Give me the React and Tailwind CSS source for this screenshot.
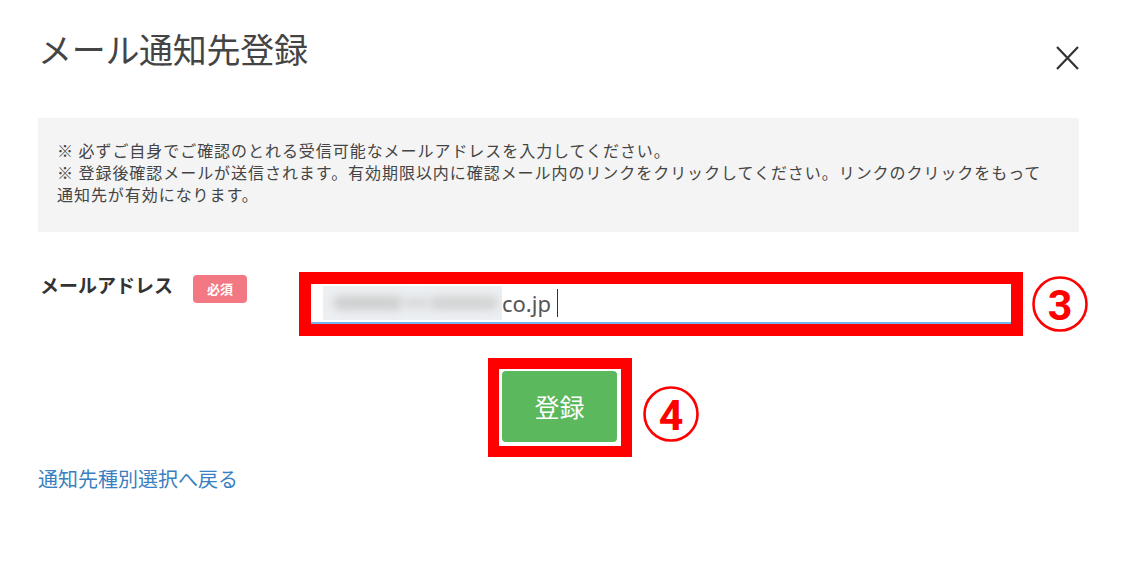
import React from "react";

const font = { fontFamily: '"Noto Sans CJK JP", "Noto Sans", sans-serif' };

const Circled = ({ n }) => (
    <svg width="58" height="58" viewBox="0 0 58 58">
        <circle cx="29" cy="29" r="26.5" fill="none" stroke="#ff0000" strokeWidth="2.6" />
        <text
            x="29"
            y="30"
            textAnchor="middle"
            dominantBaseline="central"
            fill="#ff0000"
            fontSize="43"
            fontWeight="700"
            fontFamily="Roboto, 'Liberation Sans', sans-serif"
        >
            {n}
        </text>
    </svg>
);

// blurred-out address, drawn as soft grey smudges
const Smudge = () => (
    <span className="relative w-[179px] h-[34px] bg-[#edf0f3] overflow-hidden shrink-0">
        <span className="absolute left-[10px] top-[10px] w-[70px] h-[14px] rounded-full bg-[#cdcdcd] blur-[5px]" />
        <span className="absolute left-[80px] top-[12px] w-[26px] h-[10px] rounded-full bg-[#d6d6d6] blur-[5px]" />
        <span className="absolute left-[106px] top-[10px] w-[70px] h-[14px] rounded-full bg-[#d2d2d2] blur-[5px]" />
    </span>
);

const App = () => {
    return (
        <div className="w-[1125px] h-[567px] bg-white overflow-hidden" style={font}>
            {/* header */}
            <div className="flex items-start justify-between pl-[38px] pr-[45px] pt-[32px]">
                <h1 className="text-[34px] leading-[34px] font-normal text-[#444] tracking-[-0.3px]">
                    メール通知先登録
                </h1>
                <svg className="mt-[14px]" width="25" height="24" viewBox="0 0 25 24">
                    <path d="M2 1 L23 23 M23 1 L2 23" stroke="#333" strokeWidth="2.2" fill="none" />
                </svg>
            </div>

            {/* notes */}
            <div className="ml-[38px] mt-[48px] w-[1041px] h-[114px] bg-[#f4f4f4] pl-[19px] pt-[21px] text-[16px] leading-[22px] text-[#444] tracking-[0.95px]">
                <p className="whitespace-nowrap">※ 必ずご自身でご確認のとれる受信可能なメールアドレスを入力してください。</p>
                <p className="whitespace-nowrap">
                    ※ 登録後確認メールが送信されます。有効期限以内に確認メール内のリンクをクリックしてください。リンクのクリックをもって
                </p>
                <p className="whitespace-nowrap">通知先が有効になります。</p>
            </div>

            {/* email row */}
            <div className="flex items-start ml-[38px] mt-[40px]">
                <div className="w-[261px] flex items-start">
                    <span className="ml-[2px] pt-[1px] text-[19px] leading-[24px] font-bold text-[#333]">
                        メールアドレス
                    </span>
                    <span className="ml-[20px] mt-[3px] w-[54px] h-[28px] rounded-[4px] bg-[#f27883] text-white text-[13px] font-bold flex items-center justify-center">
                        必須
                    </span>
                </div>
                <div className="flex items-center">
                    <div className="w-[724px] h-[64px] border-[12px] border-[#ff0000]">
                        <div className="h-full bg-white border-b-2 border-[#74b4ea] flex items-center pl-[12px]">
                            <Smudge />
                            <span
                                className="text-[22px] text-[#555] leading-none"
                                style={{ fontFamily: '"Noto Sans", "Open Sans", sans-serif' }}
                            >
                                co.jp
                            </span>
                            <span className="ml-[6px] w-[1.5px] h-[28px] bg-[#333]" />
                        </div>
                    </div>
                    <div className="ml-[8px]">
                        <Circled n="3" />
                    </div>
                </div>
            </div>

            {/* submit */}
            <div className="flex items-center ml-[488px] mt-[22px]">
                <div className="w-[144px] h-[99px] border-[11px] border-[#ff0000] bg-white pt-[2px] pl-[3px]">
                    <button className="w-[115px] h-[71px] rounded-[4px] bg-[#5cb85c] text-white text-[25px] leading-none">
                        登録
                    </button>
                </div>
                <div className="ml-[10px] mt-[12px]">
                    <Circled n="4" />
                </div>
            </div>

            {/* back link */}
            <div className="ml-[38px] mt-[10px]">
                <a className="text-[20px] leading-[24px] text-[#3a7fc1]">通知先種別選択へ戻る</a>
            </div>
        </div>
    );
};

export default App;
